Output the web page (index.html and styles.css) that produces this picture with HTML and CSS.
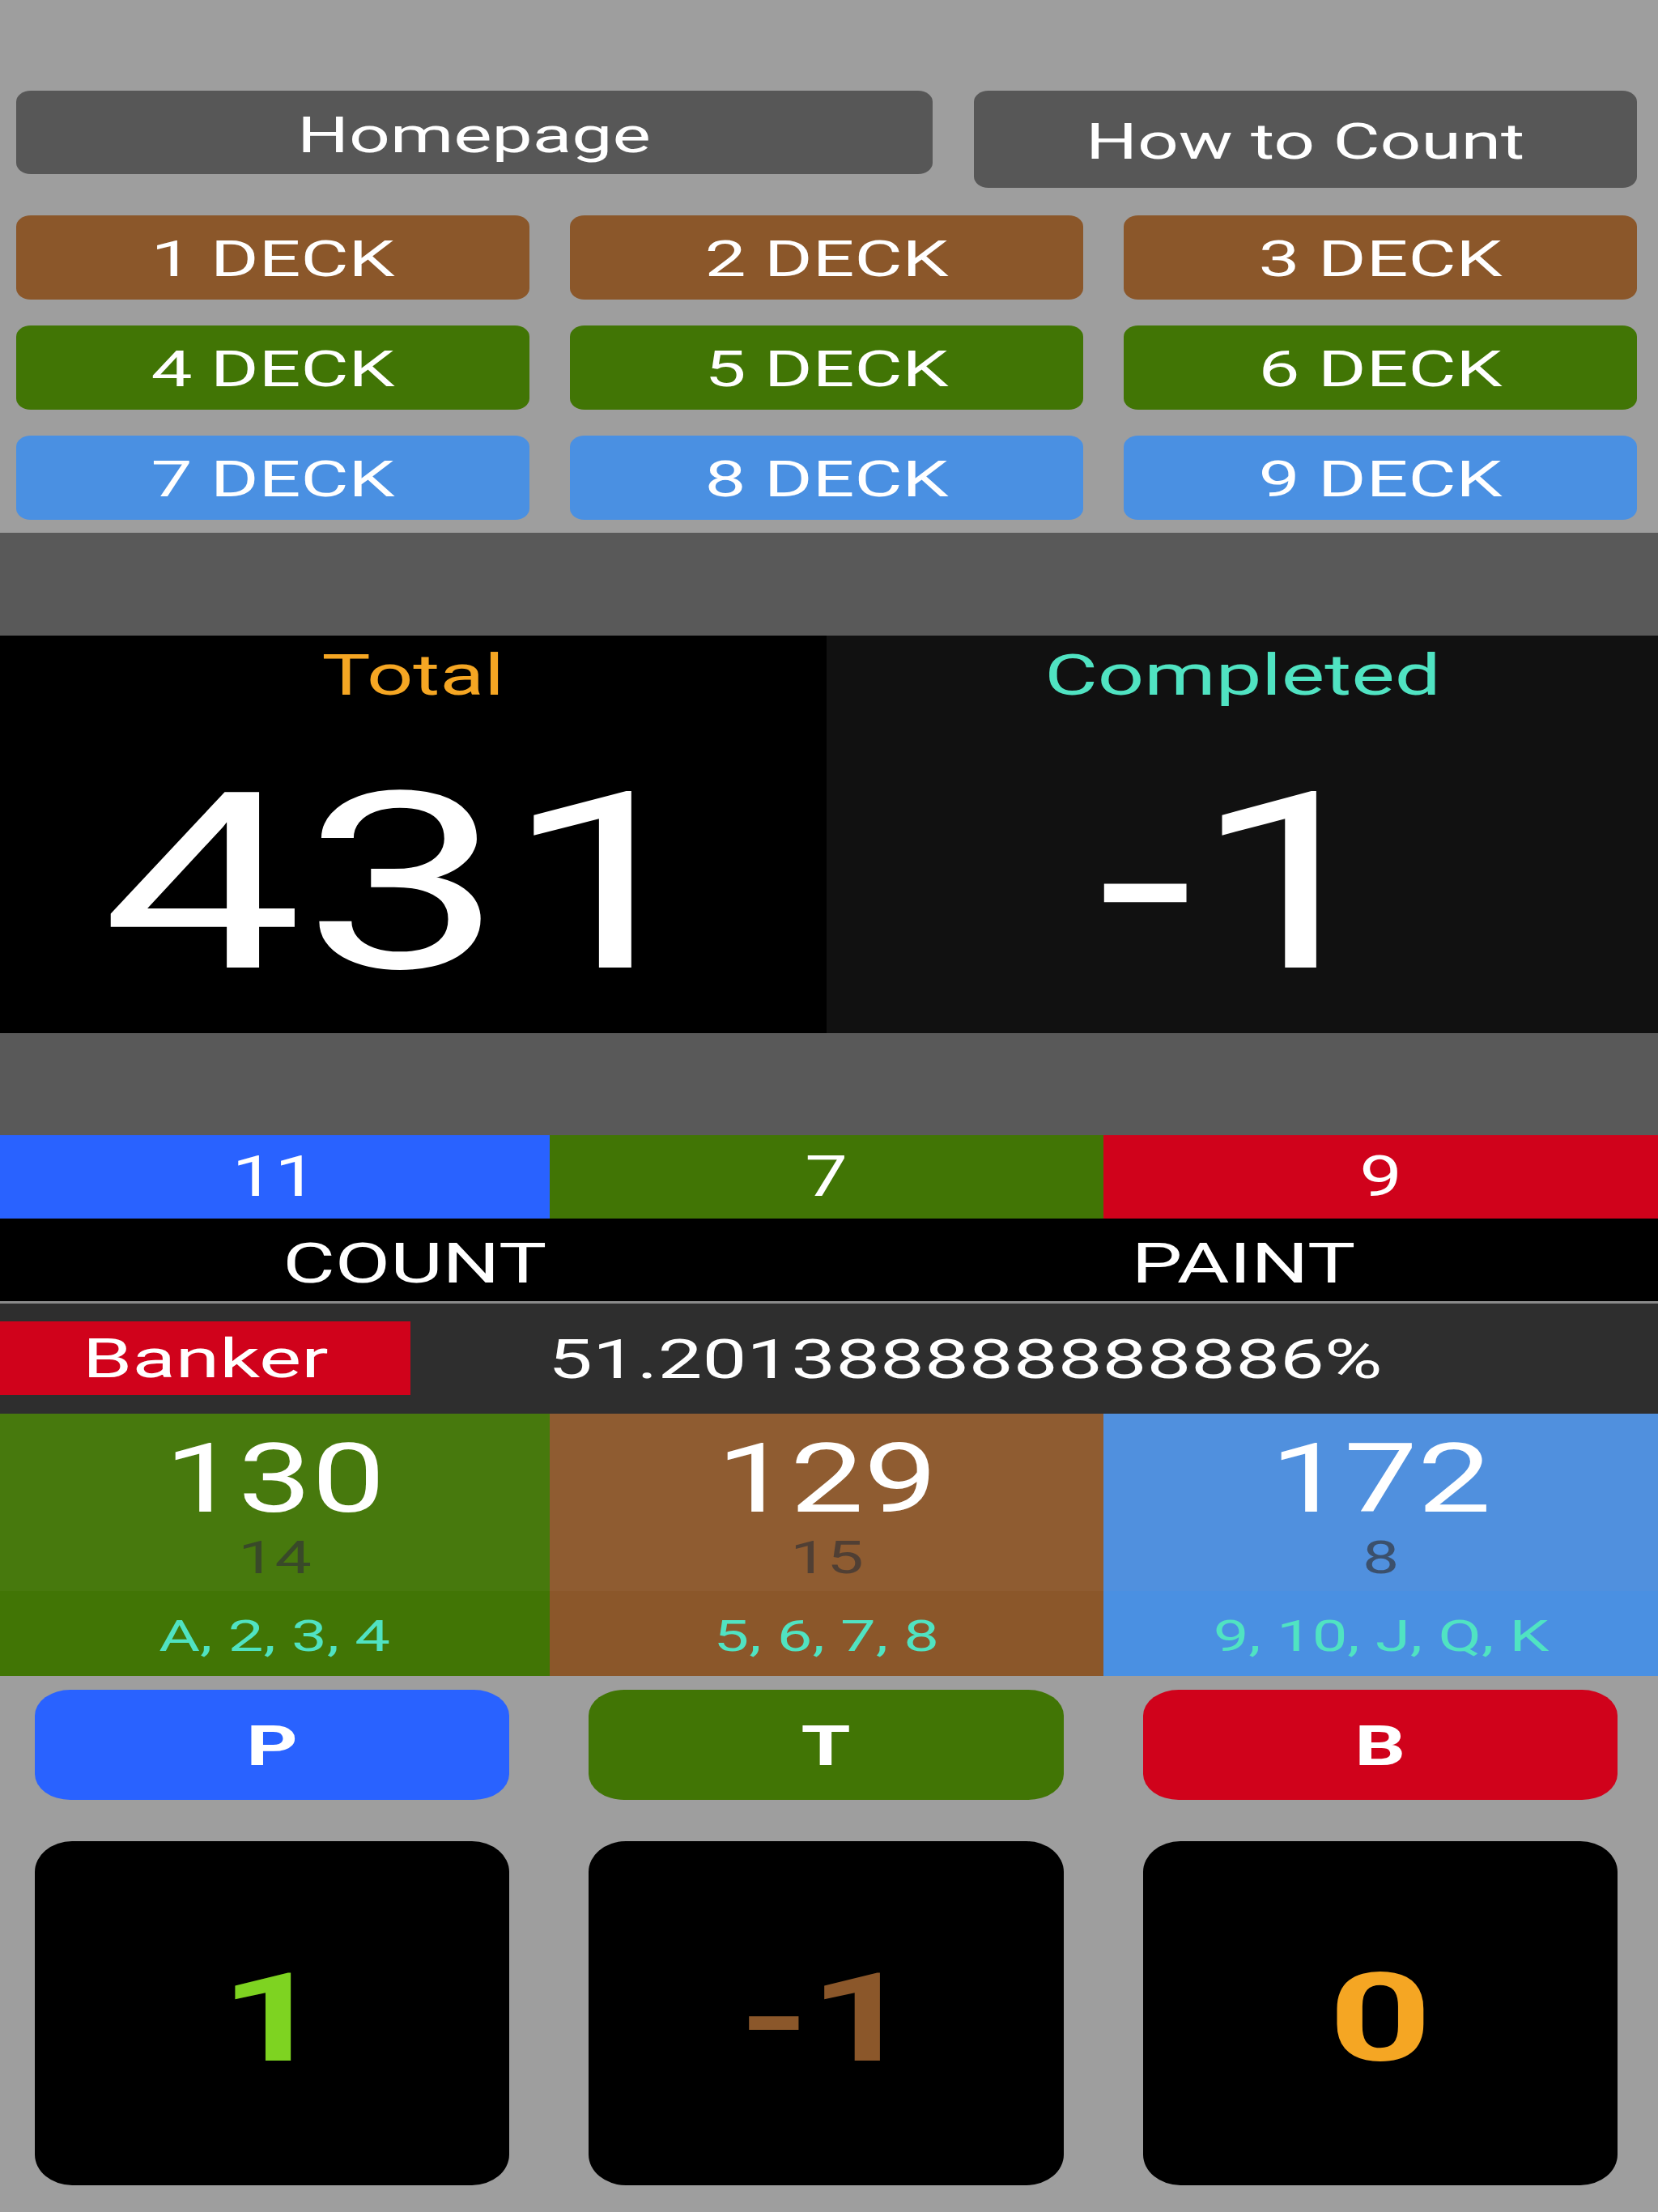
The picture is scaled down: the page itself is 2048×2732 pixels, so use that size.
FILE: index.html
```html
<!DOCTYPE html>
<html lang="en">
<head>
<meta charset="utf-8">
<title>Baccarat Count</title>
<link rel="stylesheet" href="styles.css">
</head>
<body>
<div class="app">
  <div class="nav">
    <div class="btn-home"><span class="sx">Homepage</span></div>
    <div class="btn-how"><span class="sx">How to Count</span></div>
  </div>

  <div class="decks">
    <div class="deck brown"><span class="sx-wide">1 DECK</span></div>
    <div class="deck brown"><span class="sx-wide">2 DECK</span></div>
    <div class="deck brown"><span class="sx-wide">3 DECK</span></div>
    <div class="deck green"><span class="sx-wide">4 DECK</span></div>
    <div class="deck green"><span class="sx-wide">5 DECK</span></div>
    <div class="deck green"><span class="sx-wide">6 DECK</span></div>
    <div class="deck blue"><span class="sx-wide">7 DECK</span></div>
    <div class="deck blue"><span class="sx-wide">8 DECK</span></div>
    <div class="deck blue"><span class="sx-wide">9 DECK</span></div>
  </div>

  <div class="band band-top"></div>

  <div class="score">
    <div class="half half-total">
      <div class="label label-total"><span class="sx">Total</span></div>
      <div class="bignum"><span class="sx-big sx-total">431</span></div>
    </div>
    <div class="half half-done">
      <div class="label label-done"><span class="sx">Completed</span></div>
      <div class="bignum"><span class="sx-big">-1</span></div>
    </div>
  </div>

  <div class="band band-mid"></div>

  <div class="tri">
    <div class="tri-cell c-blue"><span class="sx-num">11</span></div>
    <div class="tri-cell c-green"><span class="sx-num">7</span></div>
    <div class="tri-cell c-red"><span class="sx-num">9</span></div>
  </div>

  <div class="cp">
    <div class="cp-cell"><span class="sx">COUNT</span></div>
    <div class="cp-cell"><span class="sx">PAINT</span></div>
  </div>

  <div class="banker">
    <div class="tag"><span class="sx-wide">Banker</span></div>
    <div class="pct"><span class="sx-left">51.201388888888886%</span></div>
  </div>

  <div class="stats">
    <div class="stat s-green">
      <div class="stat-top">
        <div class="stat-big"><span class="sx-stat">130</span></div>
        <div class="stat-small"><span class="sx">14</span></div>
      </div>
      <div class="stat-bot"><span class="sx">A, 2, 3, 4</span></div>
    </div>
    <div class="stat s-brown">
      <div class="stat-top">
        <div class="stat-big"><span class="sx-stat">129</span></div>
        <div class="stat-small"><span class="sx">15</span></div>
      </div>
      <div class="stat-bot"><span class="sx">5, 6, 7, 8</span></div>
    </div>
    <div class="stat s-blue">
      <div class="stat-top">
        <div class="stat-big"><span class="sx-stat">172</span></div>
        <div class="stat-small"><span class="sx">8</span></div>
      </div>
      <div class="stat-bot"><span class="sx">9, 10, J, Q, K</span></div>
    </div>
  </div>

  <div class="ptb">
    <div class="pbtn p-blue"><span class="sx-bold">P</span></div>
    <div class="pbtn p-green"><span class="sx-bold">T</span></div>
    <div class="pbtn p-red"><span class="sx-bold">B</span></div>
  </div>

  <div class="cards">
    <div class="card"><span class="sx-bold card-num n-green">1</span></div>
    <div class="card"><span class="sx-bold card-num n-brown">-1</span></div>
    <div class="card"><span class="sx-bold card-num n-orange">0</span></div>
  </div>
</div>
</body>
</html>
```

FILE: styles.css
```css
* { box-sizing: border-box; }

html, body {
  margin: 0;
  padding: 0;
  background: #9e9e9e;
}

body {
  font-family: Roboto, "Noto Sans", "Liberation Sans", sans-serif;
  color: #ffffff;
}

.app {
  width: 2048px;
  min-height: 2732px;
  background: #9e9e9e;
}

/* horizontal stretch helpers (reference text is widened) */
.sx, .sx-wide, .sx-big, .sx-num, .sx-stat, .sx-bold, .sx-left {
  display: inline-block;
  white-space: nowrap;
}
.sx { transform: scaleX(1.44); }
.sx-wide { transform: scaleX(1.49); }
.sx-big { transform: scaleX(1.4); }
.sx-big.sx-total { transform: translateX(-12px) scaleX(1.45); }
.sx-num { transform: scaleX(1.34); }
.sx-stat { transform: scaleX(1.37); }
.sx-bold { transform: scaleX(1.45); font-weight: 700; }
.sx-left { transform: scaleX(1.48); transform-origin: left center; }

/* top navigation */
.nav {
  display: flex;
  align-items: flex-start;
  gap: 51px;
  padding: 112px 26px 0 20px;
}

.btn-home, .btn-how {
  display: flex;
  align-items: center;
  justify-content: center;
  background: #575757;
  border-radius: 18px / 14px;
  font-size: 62px;
}

.btn-home {
  width: 1132px;
  height: 103px;
  padding-top: 5px;
}

.btn-how {
  flex: 1;
  height: 120px;
  padding-top: 4px;
}

/* deck buttons */
.decks {
  display: grid;
  grid-template-columns: repeat(3, 1fr);
  column-gap: 50px;
  row-gap: 32px;
  padding: 0 26px 0 20px;
  margin-top: 34px;
}

.deck {
  height: 104px;
  display: flex;
  align-items: center;
  justify-content: center;
  border-radius: 18px / 14px;
  font-size: 61px;
  padding-top: 3px;
}

.deck.brown { background: #8b572a; }
.deck.green { background: #417505; }
.deck.blue { background: #4a90e2; }

/* dark bands */
.band {
  background: #595959;
}
.band-top {
  margin-top: 16px;
  height: 127px;
}
.band-mid {
  height: 126px;
}

/* score panel */
.score {
  display: grid;
  grid-template-columns: 1021px 1fr;
  height: 491px;
}

.half {
  display: flex;
  flex-direction: column;
  align-items: center;
  padding-top: 14px;
}

.half-total { background: #000000; }
.half-done { background: #111111; }

.label {
  font-size: 70px;
  line-height: 70px;
  height: 70px;
}
.label-total { color: #f5a623; }
.label-done { color: #50e3c2; }

.bignum {
  margin-top: 69px;
  font-size: 305px;
  line-height: 305px;
  height: 305px;
  color: #ffffff;
}

/* three colour counters */
.tri {
  display: grid;
  grid-template-columns: 679px 684px 1fr;
  height: 103px;
}

.tri-cell {
  display: flex;
  align-items: center;
  justify-content: center;
  font-size: 70px;
  line-height: 97px;
}

.c-blue { background: #2962ff; }
.c-green { background: #417505; }
.c-red { background: #d0021b; }

/* COUNT / PAINT */
.cp {
  display: grid;
  grid-template-columns: 1fr 1fr;
  height: 105px;
  background: #000000;
  border-bottom: 3px solid #8a8a8a;
}

.cp-cell {
  display: flex;
  align-items: center;
  justify-content: center;
  font-size: 69px;
  line-height: 102px;
  padding-top: 5px;
}

/* banker line */
.banker {
  display: flex;
  align-items: flex-start;
  height: 136px;
  background: #2e2e2e;
}

.tag {
  width: 507px;
  height: 91px;
  margin-top: 22px;
  background: #d0021b;
  display: flex;
  align-items: center;
  justify-content: center;
  font-size: 66px;
  padding-top: 2px;
}

.pct {
  margin-left: 170px;
  height: 91px;
  margin-top: 22px;
  display: flex;
  align-items: center;
  font-size: 66px;
  padding-top: 3px;
}

/* stats */
.stats {
  display: grid;
  grid-template-columns: 679px 684px 1fr;
  height: 324px;
}

.stat {
  display: flex;
  flex-direction: column;
}

.s-green { background: #417505; }
.s-brown { background: #8b572a; }
.s-blue { background: #4a90e2; }

.stat-top {
  height: 219px;
  display: flex;
  flex-direction: column;
  align-items: center;
  padding-top: 22px;
  background: rgba(255, 255, 255, 0.035);
}

.s-blue .stat-top { background: rgba(120, 150, 200, 0.12); }

.stat-big {
  font-size: 118px;
  line-height: 118px;
  height: 118px;
}

.stat-small {
  margin-top: 10px;
  font-size: 56px;
  line-height: 56px;
  color: rgba(50, 50, 55, 0.68);
}

.stat-bot {
  flex: 1;
  display: flex;
  align-items: center;
  justify-content: center;
  font-size: 54px;
  color: #50e3c2;
  padding-top: 6px;
}

/* P T B buttons */
.ptb {
  display: grid;
  grid-template-columns: repeat(3, 1fr);
  column-gap: 98px;
  padding: 0 50px 0 43px;
  margin-top: 17px;
}

.pbtn {
  height: 136px;
  border-radius: 44px / 32px;
  display: flex;
  align-items: center;
  justify-content: center;
  font-size: 68px;
  padding-top: 3px;
}

.p-blue { background: #2962ff; }
.p-green { background: #417505; }
.p-red { background: #d0021b; }

/* result cards */
.cards {
  display: grid;
  grid-template-columns: repeat(3, 1fr);
  column-gap: 98px;
  padding: 0 50px 0 43px;
  margin-top: 51px;
}

.card {
  height: 425px;
  background: #000000;
  border-radius: 46px / 38px;
  display: flex;
  align-items: center;
  justify-content: center;
  padding-top: 12px;
}

.card-num {
  font-size: 153px;
  line-height: 153px;
}

.n-green { color: #7ed321; }
.n-brown { color: #8b572a; }
.n-orange { color: #f5a623; }
```
